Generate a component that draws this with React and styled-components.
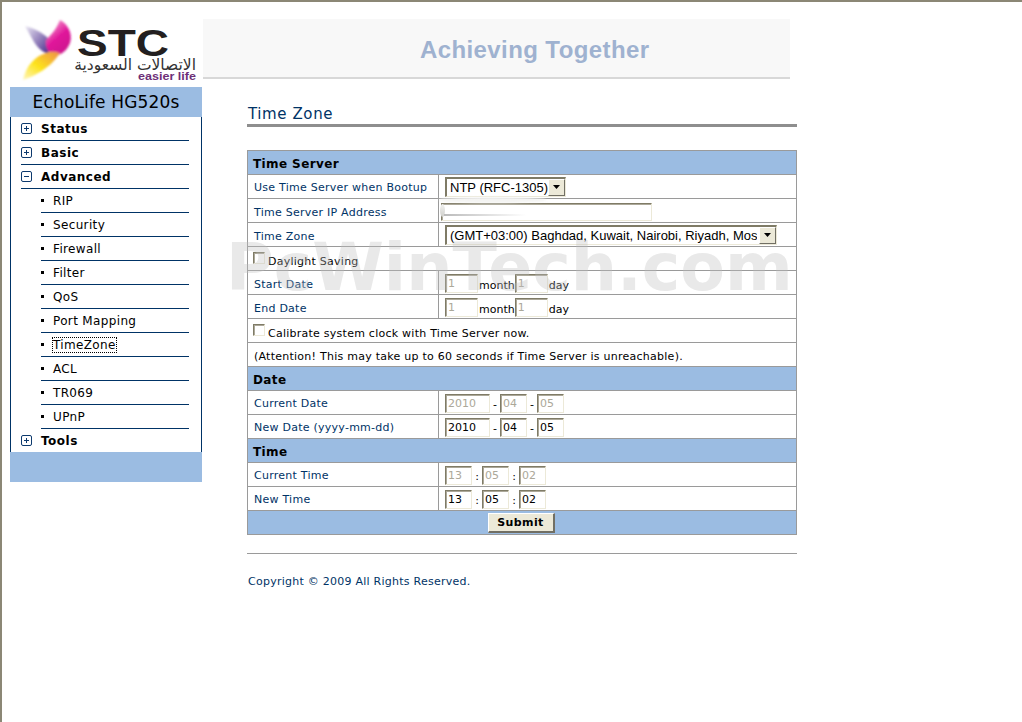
import React from 'react';
import styled, { createGlobalStyle } from 'styled-components';

const GlobalStyle = createGlobalStyle`
	html, body {
		margin: 0;
		padding: 0;
		background: #fff;
	}
	body {
		font-family: 'DejaVu Sans', Verdana, sans-serif;
		font-size: 11px;
		color: #000;
	}
`;

const menuTop = ['Status', 'Basic', 'Advanced'];
const subMenu = ['RIP', 'Security', 'Firewall', 'Filter', 'QoS', 'Port Mapping', 'TimeZone', 'ACL', 'TR069', 'UPnP'];

function Logo() {
	return (
		<LogoSvg viewBox="0 0 186 64" width="186" height="64">
			<defs>
				<linearGradient id="pink" x1="0.2" y1="0" x2="0.8" y2="1">
					<stop offset="0" stopColor="#f7a8d2" />
					<stop offset="0.5" stopColor="#e0149a" />
					<stop offset="1" stopColor="#c9198c" />
				</linearGradient>
				<linearGradient id="violet" x1="0" y1="0" x2="1" y2="0.9">
					<stop offset="0" stopColor="#ebe8f4" />
					<stop offset="1" stopColor="#4e2f8e" />
				</linearGradient>
				<linearGradient id="yellow" x1="0" y1="1" x2="1" y2="0">
					<stop offset="0" stopColor="#fff6c0" />
					<stop offset="0.45" stopColor="#fde31c" />
					<stop offset="1" stopColor="#ef8f4a" />
				</linearGradient>
				<filter id="soft" x="-10%" y="-10%" width="120%" height="120%">
					<feGaussianBlur stdDeviation="0.9" />
				</filter>
			</defs>
			<g filter="url(#soft)">
				<path d="M11 8 C20 10 29 15 35 21 C33 26 33 30 36 36 C30 36 24 30 20 24 C17 19 14 13 11 8 Z" fill="url(#violet)" />
				<path d="M46 2 C54 6 59 16 56 25 C53 33 46 38 39 38 C34 34 31 28 32 22 C36 18 42 12 46 2 Z" fill="url(#pink)" />
				<path d="M9 62 C12 48 21 38 32 35 C37 33 42 34 46 35 C40 44 33 50 26 54 C21 57 15 60 9 62 Z" fill="url(#yellow)" />
			</g>
			<text x="63" y="38" fontFamily="'Liberation Sans', sans-serif" fontWeight="700" fontSize="36" fill="#231f20" textLength="92" lengthAdjust="spacingAndGlyphs">STC</text>
			<text x="182" y="52" fontFamily="'DejaVu Sans', sans-serif" fontSize="15.5" fill="#333" direction="rtl">الاتصالات السعودية</text>
			<text x="124" y="62" fontFamily="'Liberation Sans', sans-serif" fontWeight="700" fontSize="10.5" fill="#6d2f78" textLength="58" lengthAdjust="spacingAndGlyphs">easier life</text>
		</LogoSvg>
	);
}

function PlusBox({ open }) {
	return (
		<svg width="11" height="11" viewBox="0 0 11 11">
			<rect x="0.5" y="0.5" width="10" height="10" rx="1.5" fill="#fff" stroke="#0d3a6e" />
			<path d={open ? 'M3 5.5H8' : 'M3 5.5H8M5.5 3V8'} stroke="#0d3a6e" strokeWidth="1" />
		</svg>
	);
}

function Select({ children, width }) {
	return (
		<SelectBox $width={width}>
			<SelectText>{children}</SelectText>
			<SelectArrow>
				<svg width="7" height="4" viewBox="0 0 7 4">
					<path d="M0 0H7L3.5 4Z" fill="#000" />
				</svg>
			</SelectArrow>
		</SelectBox>
	);
}

function SectionRow({ title }) {
	return (
		<tr>
			<SectionCell colSpan={2}>{title}</SectionCell>
		</tr>
	);
}

function MonthDayInputs() {
	return (
		<FieldLine>
			<TextBox $w={33} value="1" readOnly disabled />
			<UnitLabel>month</UnitLabel>
			<TextBox $w={33} value="1" readOnly disabled />
			<UnitLabel>day</UnitLabel>
		</FieldLine>
	);
}

function TripleInputs({ values, widths, sep, disabled }) {
	return (
		<FieldLine>
			<TextBox $w={widths[0]} value={values[0]} readOnly disabled={disabled} />
			<Separator>{sep}</Separator>
			<TextBox $w={widths[1]} value={values[1]} readOnly disabled={disabled} />
			<Separator>{sep}</Separator>
			<TextBox $w={widths[2]} value={values[2]} readOnly disabled={disabled} />
		</FieldLine>
	);
}

export default function App() {
	return (
		<Page>
			<GlobalStyle />
			<Sidebar>
				<LogoWrap>
					<Logo />
				</LogoWrap>
				<MenuHeader>EchoLife HG520s</MenuHeader>
				<MenuBody>
					{menuTop.map(name => (
						<TopItem key={name}>
							<PlusBox open={name === 'Advanced'} />
							<span>{name}</span>
						</TopItem>
					))}
					{subMenu.map(name => (
						<SubItem key={name}>
							<Bullet />
							<SubLabel $focus={name === 'TimeZone'}>{name}</SubLabel>
						</SubItem>
					))}
					<TopItem $last>
						<PlusBox />
						<span>Tools</span>
					</TopItem>
				</MenuBody>
				<MenuFooter />
			</Sidebar>
			<Main>
				<Banner>
					<BannerText>Achieving Together</BannerText>
				</Banner>
				<Content>
					<PageTitle>Time Zone</PageTitle>
					<FormWrap>
						<FormTable>
							<colgroup>
								<col width="191" />
								<col />
							</colgroup>
							<tbody>
								<SectionRow title="Time Server" />
								<tr>
									<LabelCell>Use Time Server when Bootup</LabelCell>
									<FieldCell>
										<Select width={121}>NTP (RFC-1305)</Select>
									</FieldCell>
								</tr>
								<tr>
									<LabelCell $low>Time Server IP Address</LabelCell>
									<FieldCell>
										<IpField>
											<TextBox $w={211} readOnly />
											<Smudge />
											<SmudgeCurl />
											<SmudgeLine />
										</IpField>
									</FieldCell>
								</tr>
								<tr>
									<LabelCell $low>Time Zone</LabelCell>
									<FieldCell>
										<Select width={332}>(GMT+03:00) Baghdad, Kuwait, Nairobi, Riyadh, Mos</Select>
									</FieldCell>
								</tr>
								<tr>
									<WideCell colSpan={2} $low>
										<CheckLine>
											<CheckBox />
											<span>Daylight Saving</span>
										</CheckLine>
									</WideCell>
								</tr>
								<tr>
									<LabelCell $low>Start Date</LabelCell>
									<FieldCell>
										<MonthDayInputs />
									</FieldCell>
								</tr>
								<tr>
									<LabelCell $low>End Date</LabelCell>
									<FieldCell>
										<MonthDayInputs />
									</FieldCell>
								</tr>
								<tr>
									<WideCell colSpan={2} $low>
										<CheckLine>
											<CheckBox />
											<span>Calibrate system clock with Time Server now.</span>
										</CheckLine>
									</WideCell>
								</tr>
								<tr>
									<WideCell colSpan={2}>(Attention! This may take up to 60 seconds if Time Server is unreachable).</WideCell>
								</tr>
								<SectionRow title="Date" />
								<tr>
									<LabelCell>Current Date</LabelCell>
									<FieldCell>
										<TripleInputs values={['2010', '04', '05']} widths={[45, 27, 27]} sep="-" disabled />
									</FieldCell>
								</tr>
								<tr>
									<LabelCell>New Date (yyyy-mm-dd)</LabelCell>
									<FieldCell>
										<TripleInputs values={['2010', '04', '05']} widths={[45, 27, 27]} sep="-" />
									</FieldCell>
								</tr>
								<SectionRow title="Time" />
								<tr>
									<LabelCell>Current Time</LabelCell>
									<FieldCell>
										<TripleInputs values={['13', '05', '02']} widths={[27, 27, 27]} sep=":" disabled />
									</FieldCell>
								</tr>
								<tr>
									<LabelCell>New Time</LabelCell>
									<FieldCell>
										<TripleInputs values={['13', '05', '02']} widths={[27, 27, 27]} sep=":" />
									</FieldCell>
								</tr>
								<tr>
									<SubmitCell colSpan={2}>
										<SubmitButton type="button">Submit</SubmitButton>
									</SubmitCell>
								</tr>
							</tbody>
						</FormTable>
						<Watermark>PcWinTech.com</Watermark>
					</FormWrap>
					<BottomRule />
					<Copyright>Copyright © 2009 All Rights Reserved.</Copyright>
				</Content>
			</Main>
		</Page>
	);
}

const Page = styled.div`
	width: 1022px;
	height: 722px;
	box-sizing: border-box;
	border-top: 2px solid #8b8775;
	border-left: 2px solid #8b8775;
	display: flex;
	overflow: hidden;
	background: #fff;
`;

const Sidebar = styled.aside`
	width: 192px;
	margin-left: 8px;
	flex-shrink: 0;
`;
const LogoWrap = styled.div`
	height: 85px;
	padding: 16px 0 0 4px;
	box-sizing: border-box;
`;
const LogoSvg = styled.svg`
	display: block;
`;
const MenuHeader = styled.div`
	height: 30px;
	background: #9bbce2;
	color: #000;
	font-size: 17px;
	letter-spacing: 0.15px;
	line-height: 30px;
	text-align: center;
`;
const MenuBody = styled.div`
	border-left: 1px solid #003366;
	border-right: 1px solid #003366;
	padding: 0 12px 0 10px;
`;
const TopItem = styled.div`
	height: ${p => (p.$last ? 23 : 24)}px;
	box-sizing: border-box;
	display: flex;
	align-items: center;
	gap: 9px;
	font-size: 12px;
	font-weight: 700;
	letter-spacing: 0.5px;
	border-bottom: ${p => (p.$last ? '0' : '1px solid #003366')};
`;
const SubItem = styled.div`
	height: 24px;
	box-sizing: border-box;
	margin-left: 20px;
	display: flex;
	align-items: center;
	gap: 9px;
	font-size: 12px;
	letter-spacing: 0.35px;
	border-bottom: 1px solid #003366;
`;
const Bullet = styled.i`
	width: 3px;
	height: 3px;
	background: #000;
`;
const SubLabel = styled.span`
	outline: ${p => (p.$focus ? '1px dotted #000' : 'none')};
	line-height: 14px;
`;
const MenuFooter = styled.div`
	height: 30px;
	background: #9bbce2;
`;

const Main = styled.main`
	margin-left: 1px;
	flex: 1;
`;
const Banner = styled.div`
	width: 587px;
	height: 60px;
	margin-top: 17px;
	box-sizing: border-box;
	background: #f8f8f8;
	border-bottom: 2px solid #d8d8d8;
	padding: 16px 0 0 217px;
`;
const BannerText = styled.div`
	font-family: 'Liberation Sans', Arial, sans-serif;
	font-size: 24px;
	font-weight: 700;
	letter-spacing: 0.4px;
	color: #9fb2d0;
	line-height: 30px;
`;
const Content = styled.div`
	margin-left: 44px;
	width: 550px;
`;
const PageTitle = styled.h1`
	margin: 24px 0 0;
	height: 24px;
	box-sizing: border-box;
	padding: 1px 0 0 1px;
	font-size: 15px;
	font-weight: 400;
	line-height: 20px;
	color: #003366;
	letter-spacing: 0.6px;
	border-bottom: 3px solid #8e8e8e;
`;
const FormWrap = styled.div`
	position: relative;
	margin-top: 23px;
`;
const FormTable = styled.table`
	width: 550px;
	border-collapse: collapse;
	table-layout: fixed;
	border: 1px solid #9a9a9a;
	td {
		height: 24px;
		padding: 0;
		box-sizing: border-box;
	}
`;
const SectionCell = styled.td`
	background: #9bbce2;
	padding: 2px 0 0 5px !important;
	font-size: 12px;
	font-weight: 700;
	letter-spacing: 0.4px;
	color: #000;
`;
const LabelCell = styled.td`
	border: 1px solid #9a9a9a;
	padding: ${p => (p.$low ? 4 : 2)}px 0 0 6px !important;
	color: #003366;
	letter-spacing: 0.25px;
`;
const FieldCell = styled.td`
	border: 1px solid #9a9a9a;
	padding: 2px 0 0 6px !important;
`;
const WideCell = styled.td`
	border: 1px solid #9a9a9a;
	padding: ${p => (p.$low ? 6 : 4)}px 0 0 6px !important;
	letter-spacing: 0.25px;
`;
const SubmitCell = styled.td`
	background: #9bbce2;
	text-align: center;
	padding-top: 1px !important;
`;
const FieldLine = styled.div`
	display: flex;
	align-items: center;
`;
const TextBox = styled.input`
	width: ${p => p.$w}px;
	height: 19px;
	box-sizing: border-box;
	padding: 0 2px;
	margin: 0;
	background: #fff;
	border-style: solid;
	border-width: 1px;
	border-color: #7f7b66 #ece9d8 #ece9d8 #7f7b66;
	box-shadow: inset 1px 1px 0 #aca899;
	font-family: 'DejaVu Sans', sans-serif;
	font-size: 11px;
	color: #000;
	&:disabled {
		color: #aca899;
		background: #fff;
		-webkit-text-fill-color: #aca899;
		opacity: 1;
	}
`;
const UnitLabel = styled.span`
	margin-left: 1px;
	margin-top: 4px;
	font-size: 11px;
`;
const Separator = styled.span`
	width: 10px;
	text-align: center;
	font-size: 11px;
	margin-top: 2px;
`;
const SelectBox = styled.div`
	width: ${p => p.$width}px;
	height: 20px;
	margin-top: -2px;
	box-sizing: border-box;
	display: flex;
	align-items: center;
	justify-content: space-between;
	background: #fff;
	border-style: solid;
	border-width: 2px 1px 1px 2px;
	border-color: #7f7b66 #ece9d8 #ece9d8 #7f7b66;
`;
const SelectText = styled.span`
	padding-left: 3px;
	font-family: 'Liberation Sans', Arial, sans-serif;
	font-size: 13px;
	white-space: nowrap;
	overflow: hidden;
`;
const SelectArrow = styled.span`
	width: 17px;
	height: 17px;
	flex-shrink: 0;
	display: flex;
	align-items: center;
	justify-content: center;
	background: #ece9d8;
	border-style: solid;
	border-width: 1px;
	border-color: #fff #716f64 #716f64 #fff;
	box-sizing: border-box;
`;
const IpField = styled.div`
	position: relative;
	margin: 1px 0 0 -4px;
	height: 18px;
	display: flex;
	input {
		height: 18px;
	}
`;
const Smudge = styled.span`
	position: absolute;
	left: -2px;
	top: -6px;
	width: 107px;
	height: 6px;
	background: #f4f4f2;
	border-radius: 50%;
	filter: blur(0.8px);
`;
const SmudgeCurl = styled.span`
	position: absolute;
	left: -1px;
	top: 1px;
	width: 5px;
	height: 13px;
	background: linear-gradient(#f2f2f0, #cfcfcb);
	border-radius: 50%;
	filter: blur(0.6px);
`;
const SmudgeLine = styled.span`
	position: absolute;
	left: 3px;
	top: 11px;
	width: 82px;
	height: 2px;
	background: linear-gradient(90deg, #bbb, #ddd 50%, #fff);
`;
const CheckLine = styled.div`
	display: flex;
	align-items: center;
	gap: 3px;
	height: 13px;
`;
const CheckBox = styled.i`
	width: 12px;
	height: 12px;
	margin: -8px 0 0 -1px;
	box-sizing: border-box;
	background: #fff;
	border-style: solid;
	border-width: 1px;
	border-color: #7f7b66 #ece9d8 #ece9d8 #7f7b66;
	box-shadow: inset 1px 1px 0 #aca899;
`;
const SubmitButton = styled.button`
	width: 67px;
	height: 20px;
	padding: 0;
	margin-right: 2px;
	background: #ece9d8;
	border-style: solid;
	border-width: 1px 2px 2px 1px;
	border-color: #fff #716f64 #716f64 #fff;
	font-family: 'DejaVu Sans', sans-serif;
	font-size: 11px;
	font-weight: 700;
	letter-spacing: 0.4px;
	color: #000;
`;
const Watermark = styled.div`
	position: absolute;
	left: -21px;
	top: 82px;
	font-family: 'DejaVu Sans', Verdana, sans-serif;
	font-size: 65px;
	font-weight: 700;
	line-height: 72px;
	color: rgba(190, 190, 190, 0.34);
	white-space: nowrap;
	pointer-events: none;
`;
const BottomRule = styled.div`
	height: 1px;
	margin-top: 18px;
	background: #9a9a9a;
`;
const Copyright = styled.div`
	margin: 21px 0 0 1px;
	color: #003366;
	letter-spacing: 0.25px;
`;
